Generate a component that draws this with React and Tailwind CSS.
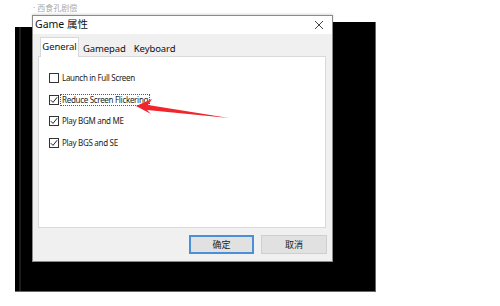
import { useState } from "react";

const rows = [
  { label: "Launch in Full Screen", checked: false },
  { label: "Reduce Screen Flickering", checked: true, focus: true },
  { label: "Play BGM and ME", checked: true },
  { label: "Play BGS and SE", checked: true },
];

function Check({ checked }) {
  return (
    <span className="flex h-[10px] w-[10px] shrink-0 items-center justify-center border border-[#333] bg-white">
      {checked && (
        <svg width="8" height="8" viewBox="0 0 8 8">
          <path d="M0.8 4.2 L3 6.4 L7.2 1.2" fill="none" stroke="#222" strokeWidth="1" />
        </svg>
      )}
    </span>
  );
}

export default function App() {
  const [tab, setTab] = useState("General");
  const tabs = ["General", "Gamepad", "Keyboard"];

  return (
    <div
      className="relative h-[306px] w-[500px] overflow-hidden bg-white"
      style={{ fontFamily: '"Noto Sans", "Noto Sans CJK SC", sans-serif' }}
    >
      {/* background window behind the dialog */}
      <div className="absolute left-[15px] top-[22px] h-[270px] w-[361px] border-r border-b border-[#666] bg-black">
        <div className="ml-[4px] h-full w-[2px] bg-[#1c1c1c]" />
      </div>
      <div className="absolute left-[15px] top-[22px] h-[5px] w-[17px] bg-white" />

      <div className="absolute left-[33px] top-[3px] text-[8px] leading-[10px] text-[#aaa]">· 西食孔剧偿</div>

      {/* dialog */}
      <div className="absolute left-[32px] top-[15px] flex h-[247px] w-[301px] flex-col border border-[#8a8a8a] bg-[#f0f0f0] shadow-[0_-1px_2px_rgba(0,0,0,0.15)]">
        <div className="flex h-[18px] items-center justify-between bg-white pl-[2px] pr-[8px]">
          <span className="text-[10.5px] text-[#111]">Game 属性</span>
          <svg width="10" height="10" viewBox="0 0 10 10">
            <path d="M1 1 L9 9 M9 1 L1 9" stroke="#444" strokeWidth="1" />
          </svg>
        </div>

        <div className="flex flex-1 flex-col px-[5px] pt-[3px]">
          <div className="flex items-end pl-[2px]">
            {tabs.map((t) => (
              <button
                key={t}
                onClick={() => setTab(t)}
                className={
                  t === tab
                    ? "relative z-10 -mb-px h-[20px] w-[39px] border border-b-0 border-[#d9d9d9] bg-white text-[9.5px] tracking-[-0.1px] text-[#111]"
                    : "h-[14px] px-[4px] text-[9.5px] leading-[14px] tracking-[-0.1px] text-[#111]"
                }
              >
                {t}
              </button>
            ))}
          </div>

          <div className="h-[172px] w-[288px] border border-[#d9d9d9] bg-white pt-[16px] pl-[10px]">
            <div className="flex flex-col gap-[11.5px]">
              {rows.map((r) => (
                <div key={r.label} className="flex h-[10px] items-center gap-[1px]">
                  <Check checked={r.checked} />
                  <span
                    className={
                      r.focus
                        ? "border border-dotted border-[#555] px-[1px] text-[8px] leading-[10px] tracking-[-0.3px] text-[#222]"
                        : "px-[2px] text-[8px] leading-[10px] tracking-[-0.3px] text-[#222]"
                    }
                  >
                    {r.label}
                  </span>
                </div>
              ))}
            </div>
          </div>

          <div className="flex justify-end gap-[7px] pt-[7px]">
            <button className="h-[19px] w-[65px] border-2 border-[#4a90d9] bg-[#e1e1e1] text-[9px] text-[#222]">确定</button>
            <button className="h-[19px] w-[66px] border border-[#cfcfcf] bg-[#e1e1e1] text-[9px] text-[#222]">取消</button>
          </div>
        </div>
      </div>

      {/* red annotation arrow */}
      <svg className="absolute left-0 top-0" width="500" height="306" viewBox="0 0 500 306">
        <polygon points="136,106 152,99 148,105 229,118 147,110 151,114" fill="#f0262c" />
      </svg>
    </div>
  );
}
